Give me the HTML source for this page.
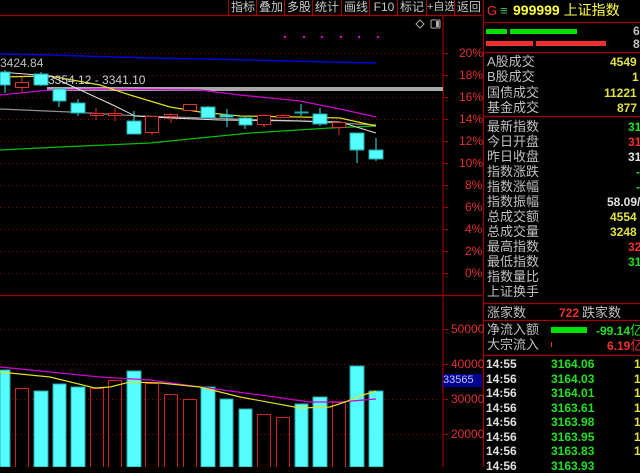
<!DOCTYPE html>
<html><head><meta charset="utf-8">
<style>
body{margin:0;width:640px;height:467px;background:#000;overflow:hidden;position:relative;font-family:"Liberation Sans","Noto Sans CJK SC",sans-serif;}
.t{position:absolute;white-space:nowrap;line-height:1;}
.lb{color:#c0c0c0;font-size:13px;left:487px;}
.v{font-size:12px;font-family:"Liberation Sans","Noto Sans CJK SC",sans-serif;font-weight:bold;}
.tb{position:absolute;top:0;height:15px;border-left:1px solid #a00;color:#c8c8c8;font-size:12px;line-height:15px;text-align:center;white-space:nowrap;overflow:hidden;}
.ax{color:#e03030;font-size:12px;left:459px;}
</style></head><body>
<svg width="640" height="467" style="position:absolute;left:0;top:0">
<g stroke="#8a0000" stroke-width="1" stroke-dasharray="1,3">
<line x1="0" y1="53.5" x2="440" y2="53.5"/><line x1="0" y1="75.5" x2="440" y2="75.5"/><line x1="0" y1="97.5" x2="440" y2="97.5"/><line x1="0" y1="119.5" x2="440" y2="119.5"/><line x1="0" y1="141.5" x2="440" y2="141.5"/><line x1="0" y1="163.5" x2="440" y2="163.5"/><line x1="0" y1="185.5" x2="440" y2="185.5"/><line x1="0" y1="207.5" x2="440" y2="207.5"/><line x1="0" y1="229.5" x2="440" y2="229.5"/><line x1="0" y1="251.5" x2="440" y2="251.5"/><line x1="0" y1="273.5" x2="440" y2="273.5"/>
<line x1="0" y1="329.5" x2="440" y2="329.5"/><line x1="0" y1="364.5" x2="440" y2="364.5"/><line x1="0" y1="399.5" x2="440" y2="399.5"/><line x1="0" y1="434.5" x2="440" y2="434.5"/>
</g>
<g stroke="#a00000" stroke-width="1.2" fill="none">
<line x1="0" y1="15.5" x2="482" y2="15.5"/>
<line x1="443" y1="16" x2="443" y2="467"/>
<line x1="0" y1="295.5" x2="482" y2="295.5"/>
<line x1="483.5" y1="0" x2="483.5" y2="467"/>
<line x1="484" y1="22.5" x2="640" y2="22.5"/>
<line x1="484" y1="52.5" x2="640" y2="52.5"/>
<line x1="484" y1="116.5" x2="640" y2="116.5"/>
<line x1="484" y1="303.5" x2="640" y2="303.5"/>
<line x1="484" y1="320.5" x2="640" y2="320.5"/>
<line x1="484" y1="355.5" x2="640" y2="355.5"/>
</g>
<g stroke="#a00000"><line x1="443" y1="53.5" x2="448" y2="53.5"/><line x1="443" y1="75.5" x2="448" y2="75.5"/><line x1="443" y1="97.5" x2="448" y2="97.5"/><line x1="443" y1="119.5" x2="448" y2="119.5"/><line x1="443" y1="141.5" x2="448" y2="141.5"/><line x1="443" y1="163.5" x2="448" y2="163.5"/><line x1="443" y1="185.5" x2="448" y2="185.5"/><line x1="443" y1="207.5" x2="448" y2="207.5"/><line x1="443" y1="229.5" x2="448" y2="229.5"/><line x1="443" y1="251.5" x2="448" y2="251.5"/><line x1="443" y1="273.5" x2="448" y2="273.5"/><line x1="443" y1="329.5" x2="448" y2="329.5"/><line x1="443" y1="364.5" x2="448" y2="364.5"/><line x1="443" y1="399.5" x2="448" y2="399.5"/><line x1="443" y1="434.5" x2="448" y2="434.5"/></g>
<g fill="#e000e0"><rect x="284" y="36" width="2" height="2"/><rect x="303" y="36" width="2" height="2"/><rect x="321" y="36" width="2" height="2"/><rect x="340" y="36" width="2" height="2"/><rect x="358" y="36" width="2" height="2"/><rect x="377" y="36" width="2" height="2"/></g>
<path d="M420 20 l4 4 -4 4 -4 -4z" fill="none" stroke="#aaa"/>
<rect x="431" y="20" width="9" height="8" rx="1" fill="none" stroke="#aaa"/><rect x="436" y="21" width="3" height="6" fill="#aaa"/>
<polyline points="0,54 50,55 150,58 250,60 330,62 376,63" fill="none" stroke="#0000e0" stroke-width="1.5"/>
<rect x="47" y="87" width="396" height="4" fill="#a8a8a8"/>
<polyline points="0,95 50,90 100,89 200,90 240,95 300,101 340,109 376,117" fill="none" stroke="#d000d0" stroke-width="1.2"/>
<polyline points="0,150 60,147 150,143 250,133 330,128 376,126" fill="none" stroke="#00c000" stroke-width="1.2"/>
<polyline points="0,109 70,112 140,116 300,121 376,125" fill="none" stroke="#909090" stroke-width="1.2"/>
<polyline points="0,77 50,76 100,85 130,95 170,107 200,112 240,116 300,117 340,118 376,126" fill="none" stroke="#e0e020" stroke-width="1.2"/>
<polyline points="0,72 50,76 115,106 135,116 170,118 220,120 300,121 340,122 376,133" fill="none" stroke="#e0e0e0" stroke-width="1"/>
<g stroke-width="1">
<line x1="5" y1="70" x2="5" y2="93" stroke="#40e0e0"/>
<line x1="22" y1="77" x2="22" y2="93" stroke="#e03030"/>
<line x1="41" y1="72" x2="41" y2="86" stroke="#40e0e0"/>
<line x1="59" y1="89" x2="59" y2="107" stroke="#40e0e0"/>
<line x1="78" y1="99" x2="78" y2="116" stroke="#40e0e0"/>
<line x1="96" y1="108" x2="96" y2="120" stroke="#e03030"/>
<line x1="115" y1="108" x2="115" y2="121" stroke="#e03030"/>
<line x1="134" y1="111" x2="134" y2="134" stroke="#40e0e0"/>
<line x1="152" y1="116" x2="152" y2="135" stroke="#e03030"/>
<line x1="171" y1="113" x2="171" y2="123" stroke="#e03030"/>
<line x1="208" y1="106" x2="208" y2="118" stroke="#40e0e0"/>
<line x1="227" y1="109" x2="227" y2="127" stroke="#40e0e0"/>
<line x1="245" y1="117" x2="245" y2="129" stroke="#40e0e0"/>
<line x1="264" y1="114" x2="264" y2="127" stroke="#e03030"/>
<line x1="283" y1="114" x2="283" y2="118" stroke="#e03030"/>
<line x1="301" y1="104" x2="301" y2="116" stroke="#40e0e0"/>
<line x1="320" y1="108" x2="320" y2="126" stroke="#40e0e0"/>
<line x1="339" y1="122" x2="339" y2="135" stroke="#e03030"/>
<line x1="357" y1="133" x2="357" y2="163" stroke="#40e0e0"/>
<line x1="376" y1="138" x2="376" y2="161" stroke="#40e0e0"/>
</g>
<g fill="#5ff" stroke="#2aa">
<rect x="0" y="72" width="10" height="13"/><rect x="34" y="74" width="14" height="11"/><rect x="53" y="89" width="13" height="12"/><rect x="71" y="103" width="14" height="10"/><rect x="127" y="121" width="14" height="13"/><rect x="201" y="107" width="14" height="11"/><rect x="220" y="115" width="13" height="2"/><rect x="239" y="118" width="13" height="7"/><rect x="295" y="112" width="13" height="1"/><rect x="313" y="114" width="14" height="10"/><rect x="350" y="133" width="14" height="17"/><rect x="369" y="150" width="14" height="9"/>
</g>
<g fill="#000" stroke="#e03030">
<rect x="15.5" y="82.5" width="13" height="5"/><rect x="90.5" y="113.5" width="13" height="2"/><rect x="108.5" y="113.5" width="13" height="2"/><rect x="145.5" y="116.5" width="13" height="16"/><rect x="164.5" y="114.5" width="13" height="2"/><rect x="183.5" y="104.5" width="13" height="6"/><rect x="257.5" y="115.5" width="13" height="9"/><rect x="276.5" y="115.5" width="13" height="2"/><rect x="332.5" y="122.5" width="13" height="5"/>
</g>
<g fill="#5ff" stroke="#2aa">
<rect x="0" y="370" width="10" height="97"/><rect x="34" y="391" width="14" height="76"/><rect x="53" y="384" width="13" height="83"/><rect x="71" y="387" width="14" height="80"/><rect x="127" y="371" width="14" height="96"/><rect x="201" y="387" width="14" height="80"/><rect x="220" y="399" width="13" height="68"/><rect x="239" y="409" width="13" height="58"/><rect x="295" y="404" width="13" height="63"/><rect x="313" y="397" width="14" height="70"/><rect x="350" y="366" width="14" height="101"/><rect x="369" y="391" width="14" height="76"/>
</g>
<g fill="none" stroke="#d02020">
<rect x="15.5" y="388.5" width="13" height="80"/><rect x="90.5" y="388.5" width="13" height="80"/><rect x="108.5" y="380.5" width="13" height="90"/><rect x="145.5" y="383.5" width="13" height="90"/><rect x="164.5" y="394.5" width="13" height="80"/><rect x="183.5" y="399.5" width="13" height="80"/><rect x="257.5" y="414.5" width="13" height="60"/><rect x="276.5" y="417.5" width="13" height="60"/><rect x="332.5" y="402.5" width="13" height="70"/>
</g>
<polyline points="0,367 100,377 150,380 200,387 260,395 310,402 340,402 376,399" fill="none" stroke="#d000d0" stroke-width="1.2"/>
<polyline points="0,372 50,377 95,388 110,387 130,382 160,383 200,387 240,397 300,408 330,407 345,402 360,396 376,391" fill="none" stroke="#e0e020" stroke-width="1.2"/>
<rect x="486" y="29" width="21" height="5" fill="#00e000"/><rect x="510" y="29" width="67" height="5" fill="#00e000"/>
<rect x="486" y="41" width="47" height="5" fill="#f03030"/><rect x="536" y="41" width="70" height="5" fill="#f03030"/>
<rect x="551" y="327" width="36" height="6" fill="#00e000"/>
<rect x="551" y="342" width="1" height="5" fill="#f03030"/>
</svg>
<div class="tb" style="left:228px;width:28px">指标</div>
<div class="tb" style="left:256px;width:28px">叠加</div>
<div class="tb" style="left:284px;width:28px">多股</div>
<div class="tb" style="left:312px;width:28px">统计</div>
<div class="tb" style="left:341px;width:28px">画线</div>
<div class="tb" style="left:369px;width:28px">F10</div>
<div class="tb" style="left:397px;width:28px">标记</div>
<div class="tb" style="left:426px;width:28px;font-size:11px">+自选</div>
<div class="tb" style="left:454px;width:28px">返回</div>
<div class="t" style="left:0;top:57px;color:#c0c0c0;font-size:12px">3424.84</div>
<div class="t" style="left:48px;top:74px;color:#d0d0d0;font-size:12px">3354.12 - 3341.10</div>
<div class="t ax" style="top:47px">20%</div><div class="t ax" style="top:69px">18%</div><div class="t ax" style="top:91px">16%</div><div class="t ax" style="top:113px">14%</div><div class="t ax" style="top:135px">12%</div><div class="t ax" style="top:157px">10%</div><div class="t ax" style="left:465px;top:179px">8%</div><div class="t ax" style="left:465px;top:201px">6%</div><div class="t ax" style="left:465px;top:223px">4%</div><div class="t ax" style="left:465px;top:245px">2%</div><div class="t ax" style="left:465px;top:267px">0%</div>
<div class="t ax" style="left:451px;top:323px">50000</div><div class="t ax" style="left:451px;top:358px">40000</div><div class="t ax" style="left:451px;top:393px">30000</div><div class="t ax" style="left:451px;top:428px">20000</div>
<div class="t" style="left:443px;top:374px;width:39px;height:13px;background:#000090;color:#c0c0ff;font-size:11px;line-height:13px">33565</div>
<div class="t" style="left:487px;top:4px;font-size:13px;color:#f03030">G</div>
<div class="t" style="left:500px;top:4px;font-size:13px;color:#40c040">≡</div>
<div class="t" style="left:513px;top:3px;font-size:14px;color:#ffff40;font-weight:bold">999999 <span style="font-weight:normal">上证指数</span></div>
<div class="t v" style="left:633px;top:25px;color:#c0c0c0">6</div><div class="t v" style="left:633px;top:38px;color:#c0c0c0">8</div>
<div class="t lb" style="top:55px">A股成交</div><div class="t v" style="left:610px;top:56px;color:#e0e040">4549</div>
<div class="t lb" style="top:70px">B股成交</div><div class="t v" style="left:632px;top:71px;color:#e0e040">1</div>
<div class="t lb" style="top:86px">国债成交</div><div class="t v" style="left:604px;top:87px;color:#e0e040">11221</div>
<div class="t lb" style="top:101px">基金成交</div><div class="t v" style="left:617px;top:102px;color:#e0e040">877</div>
<div class="t lb" style="top:120px">最新指数</div><div class="t v" style="left:628px;top:121px;color:#20e020">31</div>
<div class="t lb" style="top:135px">今日开盘</div><div class="t v" style="left:628px;top:136px;color:#f03030">31</div>
<div class="t lb" style="top:150px">昨日收盘</div><div class="t v" style="left:628px;top:151px;color:#e0e0e0">31</div>
<div class="t lb" style="top:165px">指数涨跌</div><div class="t v" style="left:636px;top:166px;color:#20e020">-</div>
<div class="t lb" style="top:180px">指数涨幅</div><div class="t v" style="left:636px;top:181px;color:#20e020">-</div>
<div class="t lb" style="top:195px">指数振幅</div><div class="t v" style="left:607px;top:196px;color:#e0e0e0">58.09/</div>
<div class="t lb" style="top:210px">总成交额</div><div class="t v" style="left:610px;top:211px;color:#e0e040">4554</div>
<div class="t lb" style="top:225px">总成交量</div><div class="t v" style="left:610px;top:226px;color:#e0e040">3248</div>
<div class="t lb" style="top:240px">最高指数</div><div class="t v" style="left:628px;top:241px;color:#f03030">32</div>
<div class="t lb" style="top:255px">最低指数</div><div class="t v" style="left:628px;top:256px;color:#20e020">31</div>
<div class="t lb" style="top:270px">指数量比</div>
<div class="t lb" style="top:285px">上证换手</div>
<div class="t lb" style="top:306px">涨家数</div><div class="t v" style="left:559px;top:307px;color:#f03030">722</div><div class="t" style="left:582px;top:306px;color:#c0c0c0;font-size:13px">跌家数</div>
<div class="t lb" style="top:323px">净流入额</div><div class="t v" style="left:596px;top:324px;color:#20e020">-99.14<span style="font-weight:normal;font-size:13px">亿</span></div>
<div class="t lb" style="top:338px">大宗流入</div><div class="t v" style="left:607px;top:339px;color:#f03030">6.19<span style="font-weight:normal;font-size:13px">亿</span></div>
<div class="t v" style="left:486px;top:358px;color:#e0e0e0">14:55</div><div class="t v" style="left:551px;top:358px;color:#20e020">3164.06</div><div class="t v" style="left:634px;top:358px;color:#e0e040">1</div>
<div class="t v" style="left:486px;top:373px;color:#e0e0e0">14:56</div><div class="t v" style="left:551px;top:373px;color:#20e020">3164.03</div><div class="t v" style="left:634px;top:373px;color:#e0e040">1</div>
<div class="t v" style="left:486px;top:387px;color:#e0e0e0">14:56</div><div class="t v" style="left:551px;top:387px;color:#20e020">3164.01</div><div class="t v" style="left:634px;top:387px;color:#e0e040">1</div>
<div class="t v" style="left:486px;top:402px;color:#e0e0e0">14:56</div><div class="t v" style="left:551px;top:402px;color:#20e020">3163.61</div><div class="t v" style="left:634px;top:402px;color:#e0e040">1</div>
<div class="t v" style="left:486px;top:416px;color:#e0e0e0">14:56</div><div class="t v" style="left:551px;top:416px;color:#20e020">3163.98</div><div class="t v" style="left:634px;top:416px;color:#e0e040">1</div>
<div class="t v" style="left:486px;top:431px;color:#e0e0e0">14:56</div><div class="t v" style="left:551px;top:431px;color:#20e020">3163.95</div><div class="t v" style="left:634px;top:431px;color:#e0e040">1</div>
<div class="t v" style="left:486px;top:445px;color:#e0e0e0">14:56</div><div class="t v" style="left:551px;top:445px;color:#20e020">3163.83</div><div class="t v" style="left:634px;top:445px;color:#e0e040">1</div>
<div class="t v" style="left:486px;top:460px;color:#e0e0e0">14:56</div><div class="t v" style="left:551px;top:460px;color:#20e020">3163.93</div>
</body></html>
